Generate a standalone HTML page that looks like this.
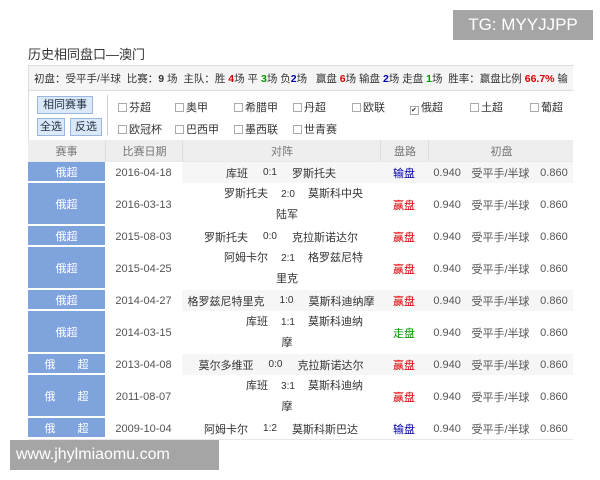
<!DOCTYPE html><html><head><meta charset="utf-8"><style>
body{margin:0;width:600px;height:480px;background:#fff;position:relative;overflow:hidden;font-family:"Liberation Sans","Noto Sans CJK SC",sans-serif;font-size:11px;color:#333}
.a{position:absolute;white-space:nowrap}
.tg{left:453px;top:10px;width:140px;height:30px;background:#a5a5a5;color:#fff;font-size:17px;line-height:30px;text-align:center}
.wm{left:10px;top:440px;width:209px;height:30px;background:#a5a5a5;color:#fff;font-size:16px;line-height:30px;padding-left:6px;box-sizing:border-box}
.box{left:28px;top:65px;width:545px;height:380px;border:1px solid #ddd;border-right:none;border-bottom:none}
.r{color:#d00;font-weight:bold}.g{color:#090;font-weight:bold}.b{color:#00a;font-weight:bold}
.btn{background:#dbe8f8;border:1px solid #9bb7df;color:#234;text-align:center;line-height:16px}
.cb{display:inline-block;width:7px;height:7px;border:1px solid #aaa;margin-right:2px;vertical-align:-1px}
.row{position:absolute;left:28px;width:545px;border-bottom:1px solid #e8e8e8}
.c{position:absolute;top:0;height:100%;display:flex;align-items:center;justify-content:center;text-align:center}
.lg{left:0;width:77px;background:#7fa3dd;color:#fff;border-bottom:2px solid #fff;box-sizing:border-box}
</style></head><body>
<div class="a tg">TG: MYYJJPP</div>
<div class="a" style="left:28px;top:44px;font-size:13px;color:#333">历史相同盘口—澳门</div>
<div class="a box"></div>
<div class="a" style="left:29px;top:66px;width:544px;height:24px;background:#f5f5f5;border-bottom:1px solid #ddd"></div>
<div class="a" style="left:34px;top:71px;font-size:10.5px">初盘：受平手/半球 &nbsp;比赛：<b>9</b> 场 &nbsp;主队：胜 <span class="r">4</span>场 平 <span class="g">3</span>场 负<span class="b">2</span>场 &nbsp; 赢盘 <span class="r">6</span>场 输盘 <span class="b">2</span>场 走盘 <span class="g">1</span>场 &nbsp;胜率：赢盘比例 <span class="r">66.7%</span> 输</div>
<div class="a btn" style="left:37px;top:96px;width:54px;height:16px">相同赛事</div>
<div class="a btn" style="left:37px;top:118px;width:26px;height:16px">全选</div>
<div class="a btn" style="left:70px;top:118px;width:30px;height:16px">反选</div>
<div class="a" style="left:107px;top:95px;width:1px;height:40px;background:#ccc"></div>
<div class="a" style="left:118px;top:99px"><span class="cb"></span>芬超</div>
<div class="a" style="left:175px;top:99px"><span class="cb"></span>奥甲</div>
<div class="a" style="left:234px;top:99px"><span class="cb"></span>希腊甲</div>
<div class="a" style="left:293px;top:99px"><span class="cb"></span>丹超</div>
<div class="a" style="left:352px;top:99px"><span class="cb"></span>欧联</div>
<div class="a" style="left:410px;top:99px"><span class="cb" style="font-size:7px;line-height:7px">✔</span>俄超</div>
<div class="a" style="left:470px;top:99px"><span class="cb"></span>土超</div>
<div class="a" style="left:530px;top:99px"><span class="cb"></span>葡超</div>
<div class="a" style="left:118px;top:121px"><span class="cb"></span>欧冠杯</div>
<div class="a" style="left:175px;top:121px"><span class="cb"></span>巴西甲</div>
<div class="a" style="left:234px;top:121px"><span class="cb"></span>墨西联</div>
<div class="a" style="left:293px;top:121px"><span class="cb"></span>世青赛</div>
<div class="row" style="top:140px;height:21px;background:#eee;color:#777">
<div class="c" style="left:0;width:77px">赛事</div><div class="c" style="left:77px;width:77px;border-left:1px solid #ddd">比赛日期</div><div class="c" style="left:154px;width:198px;border-left:1px solid #ddd">对阵</div><div class="c" style="left:352px;width:48px;border-left:1px solid #ddd">盘路</div><div class="c" style="left:400px;width:145px;border-left:1px solid #ddd">初盘</div></div>
<div id="rows"></div>
<script>
var d=[[162,21,"俄超","2016-04-18","库班","0:1","罗斯托夫","","输盘","b",1],
[183,43,"俄超","2016-03-13","罗斯托夫","2:0","莫斯科中央","陆军","赢盘","r",0],
[226,21,"俄超","2015-08-03","罗斯托夫","0:0","克拉斯诺达尔","","赢盘","r",0],
[247,43,"俄超","2015-04-25","阿姆卡尔","2:1","格罗兹尼特","里克","赢盘","r",0],
[290,21,"俄超","2014-04-27","格罗兹尼特里克","1:0","莫斯科迪纳摩","","赢盘","r",1],
[311,43,"俄超","2014-03-15","库班","1:1","莫斯科迪纳","摩","走盘","g",0],
[354,21,"俄　　超","2013-04-08","莫尔多维亚","0:0","克拉斯诺达尔","","赢盘","r",1],
[375,43,"俄　　超","2011-08-07","库班","3:1","莫斯科迪纳","摩","赢盘","r",0],
[418,21,"俄　　超","2009-10-04","阿姆卡尔","1:2","莫斯科斯巴达","","输盘","b",0]];
var h="";d.forEach(function(r){var bg=r[10]?"#f6f6f6":"#fff";
var m=r[7]?'<div style="line-height:21px"><div><span style="display:inline-block;width:84px;text-align:right">'+r[4]+'</span><span style="display:inline-block;width:40px;font-size:10px">'+r[5]+'</span><span style="display:inline-block;width:70px;text-align:left">'+r[6]+'</span></div><div style="padding-left:12px">'+r[7]+'</div></div>':'<span>'+r[4]+'</span><span style="margin:0 15px;font-size:10px">'+r[5]+'</span><span>'+r[6]+'</span>';
h+='<div class="row" style="top:'+r[0]+'px;height:'+r[1]+'px;background:'+bg+'"><div class="c lg">'+r[2]+'</div><div class="c" style="left:77px;width:77px;background:#fff;color:#555">'+r[3]+'</div><div class="c" style="left:154px;width:198px">'+m+'</div><div class="c '+r[9]+'" style="left:352px;width:48px;font-weight:normal">'+r[8]+'</div><div class="c" style="left:400px;width:145px;justify-content:space-around;color:#555"><span>0.940</span><span>受平手/半球</span><span>0.860</span></div></div>';});
document.getElementById("rows").innerHTML=h;
</script>
<div class="a wm">www.jhylmiaomu.com</div>
</body></html>
